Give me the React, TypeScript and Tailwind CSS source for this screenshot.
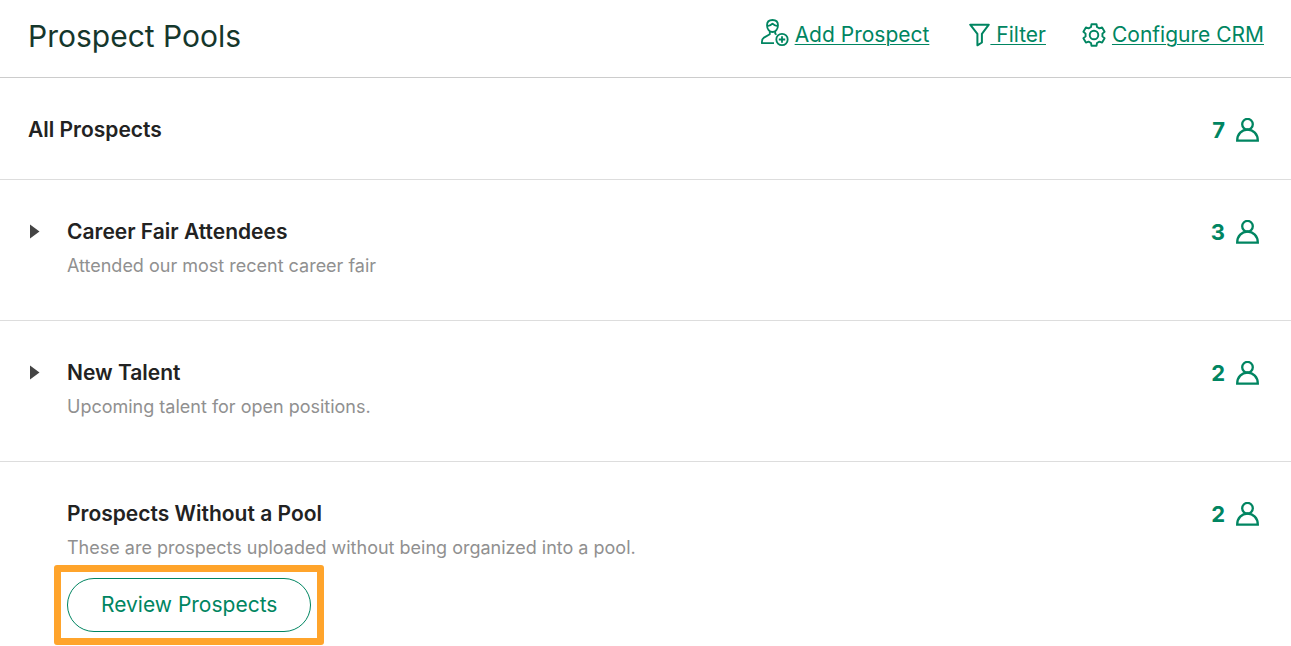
import type { ReactNode } from "react"

type Pool = {
    name: string
    description: string
    count: number
}

const pools: Pool[] = [
    { name: "Career Fair Attendees", description: "Attended our most recent career fair", count: 3 },
    { name: "New Talent", description: "Upcoming talent for open positions.", count: 2 },
]

function PersonIcon() {
    return (
        <svg width="24" height="24" viewBox="0 0 24 24" fill="none" stroke="currentColor" strokeWidth="2.3" aria-hidden="true">
            <circle cx="11.5" cy="6.2" r="5.3" />
            <path d="M1.2 22.6C1.2 16 5.8 11.6 11.5 11.6S21.8 16 21.8 22.6Z" />
        </svg>
    )
}

function AddPersonIcon() {
    return (
        <svg width="28" height="32" viewBox="0 0 28 32" fill="none" stroke="currentColor" strokeWidth="1.8" strokeLinejoin="round" aria-hidden="true">
            <path d="M11.5 1C8 1 6 3.3 6 6.3c0 3.8 2.5 6.7 5.5 6.7S17 10.1 17 6.3C17 3.3 15 1 11.5 1Z" />
            <path d="M6.2 7.2C8.5 7 10.2 6 11.5 4.600c1.4 1.5 3 2.4 5.3 2.6" />
            <path d="M8.8 12v3.2L3 18.6C1.5 19.600 .9 21 .9 23v1.2H13M14.2 12v2.6l1.3 1" />
            <circle cx="21" cy="20.5" r="5.700" />
            <path d="M21 17.300v6.400M17.800 20.500h6.400" />
        </svg>
    )
}

function FilterIcon() {
    return (
        <svg width="21" height="24" viewBox="0 0 21 24" fill="none" stroke="currentColor" strokeWidth="2" strokeLinejoin="round" aria-hidden="true">
            <path d="M1.2 1.7h18.6l-6.900 9.100v8.700L8.400 22.300V10.800Z" />
        </svg>
    )
}

function GearIcon() {
    return (
        <svg width="24" height="24" viewBox="0 0 24 24" fill="none" stroke="currentColor" strokeWidth="1.9" strokeLinejoin="round" aria-hidden="true">
            <path d="M9.5 1.2H14.5L15 4 17.43 5.4 20.1 4.43 22.6 8.76 20.43 10.6V13.4L22.6 15.24 20.1 19.57 17.43 18.6 15 20 14.5 22.8H9.5L9 20 6.57 18.6 3.9 19.57 1.4 15.24 3.57 13.4V10.6L1.4 8.76 3.9 4.43 6.57 5.4 9 4Z" />
            <circle cx="12" cy="12" r="4.3" />
        </svg>
    )
}

function Count({ value }: { value: number }) {
    return (
        <div className="flex items-center gap-[11px] text-[22px] leading-6 font-bold text-[#008561]">
            <span>{value}</span>
            <PersonIcon />
        </div>
    )
}

function HeaderLink({ icon, gap, children }: { icon: ReactNode; gap?: boolean; children: ReactNode }) {
    return (
        <a href="#" className={`flex items-center text-[#008561] ${gap ? "gap-1.5" : ""}`}>
            {icon}
            <span className="whitespace-pre underline decoration-1 underline-offset-2">{children}</span>
        </a>
    )
}

export default function App() {
    return (
        <main className="bg-white font-['Inter',sans-serif]">
            <header className="flex items-center justify-between border-b border-[#cccccc] pt-4 pr-[27px] pb-5 pl-7">
                <h1 className="text-[30px] leading-[41px] text-[#15372c]">Prospect Pools</h1>
                <nav className="flex items-center pb-1 text-[21px] leading-7">
                    <HeaderLink icon={<AddPersonIcon />} gap>Add Prospect</HeaderLink>
                    <div className="ml-10">
                        <HeaderLink icon={<FilterIcon />}>{" Filter"}</HeaderLink>
                    </div>
                    <div className="ml-9">
                        <HeaderLink icon={<GearIcon />} gap>Configure CRM</HeaderLink>
                    </div>
                </nav>
            </header>

            <section className="flex items-start justify-between border-b border-[#dddddd] pt-10 pr-[31px] pb-[37px] pl-7">
                <h2 className="text-[21px] leading-6 font-semibold text-[#222222]">All Prospects</h2>
                <Count value={7} />
            </section>

            {pools.map((pool) => (
                <section key={pool.name} className="flex items-start border-b border-[#dddddd] pt-10 pr-[31px] pb-10 pl-[30px]">
                    <button type="button" aria-label={`Expand ${pool.name}`} className="mt-1 w-[37px] text-[#444444]">
                        <svg width="10" height="16" viewBox="0 0 10 16" fill="currentColor" aria-hidden="true">
                            <path d="M0 .5 9.5 7.5 0 14.5Z" />
                        </svg>
                    </button>
                    <div className="flex-1">
                        <h2 className="text-[21px] leading-6 font-semibold text-[#222222]">{pool.name}</h2>
                        <p className="mt-2 text-[18px] leading-7 text-[#909090]">{pool.description}</p>
                    </div>
                    <Count value={pool.count} />
                </section>
            ))}

            <section className="flex items-start pt-10 pr-[31px] pl-[67px]">
                <div className="flex-1">
                    <h2 className="text-[21px] leading-6 font-semibold text-[#222222]">Prospects Without a Pool</h2>
                    <p className="mt-2 text-[18px] leading-7 text-[#909090]">
                        These are prospects uploaded without being organized into a pool.
                    </p>
                    <div className="mt-[3px] -ml-[13px] w-fit rounded-[3px] border-[7px] border-[#ffa42b] p-1.5">
                        <button
                            type="button"
                            className="rounded-full border border-[#008561] px-[33px] py-3 text-[21px] leading-7 text-[#008561]"
                        >
                            Review Prospects
                        </button>
                    </div>
                </div>
                <Count value={2} />
            </section>
        </main>
    )
}
